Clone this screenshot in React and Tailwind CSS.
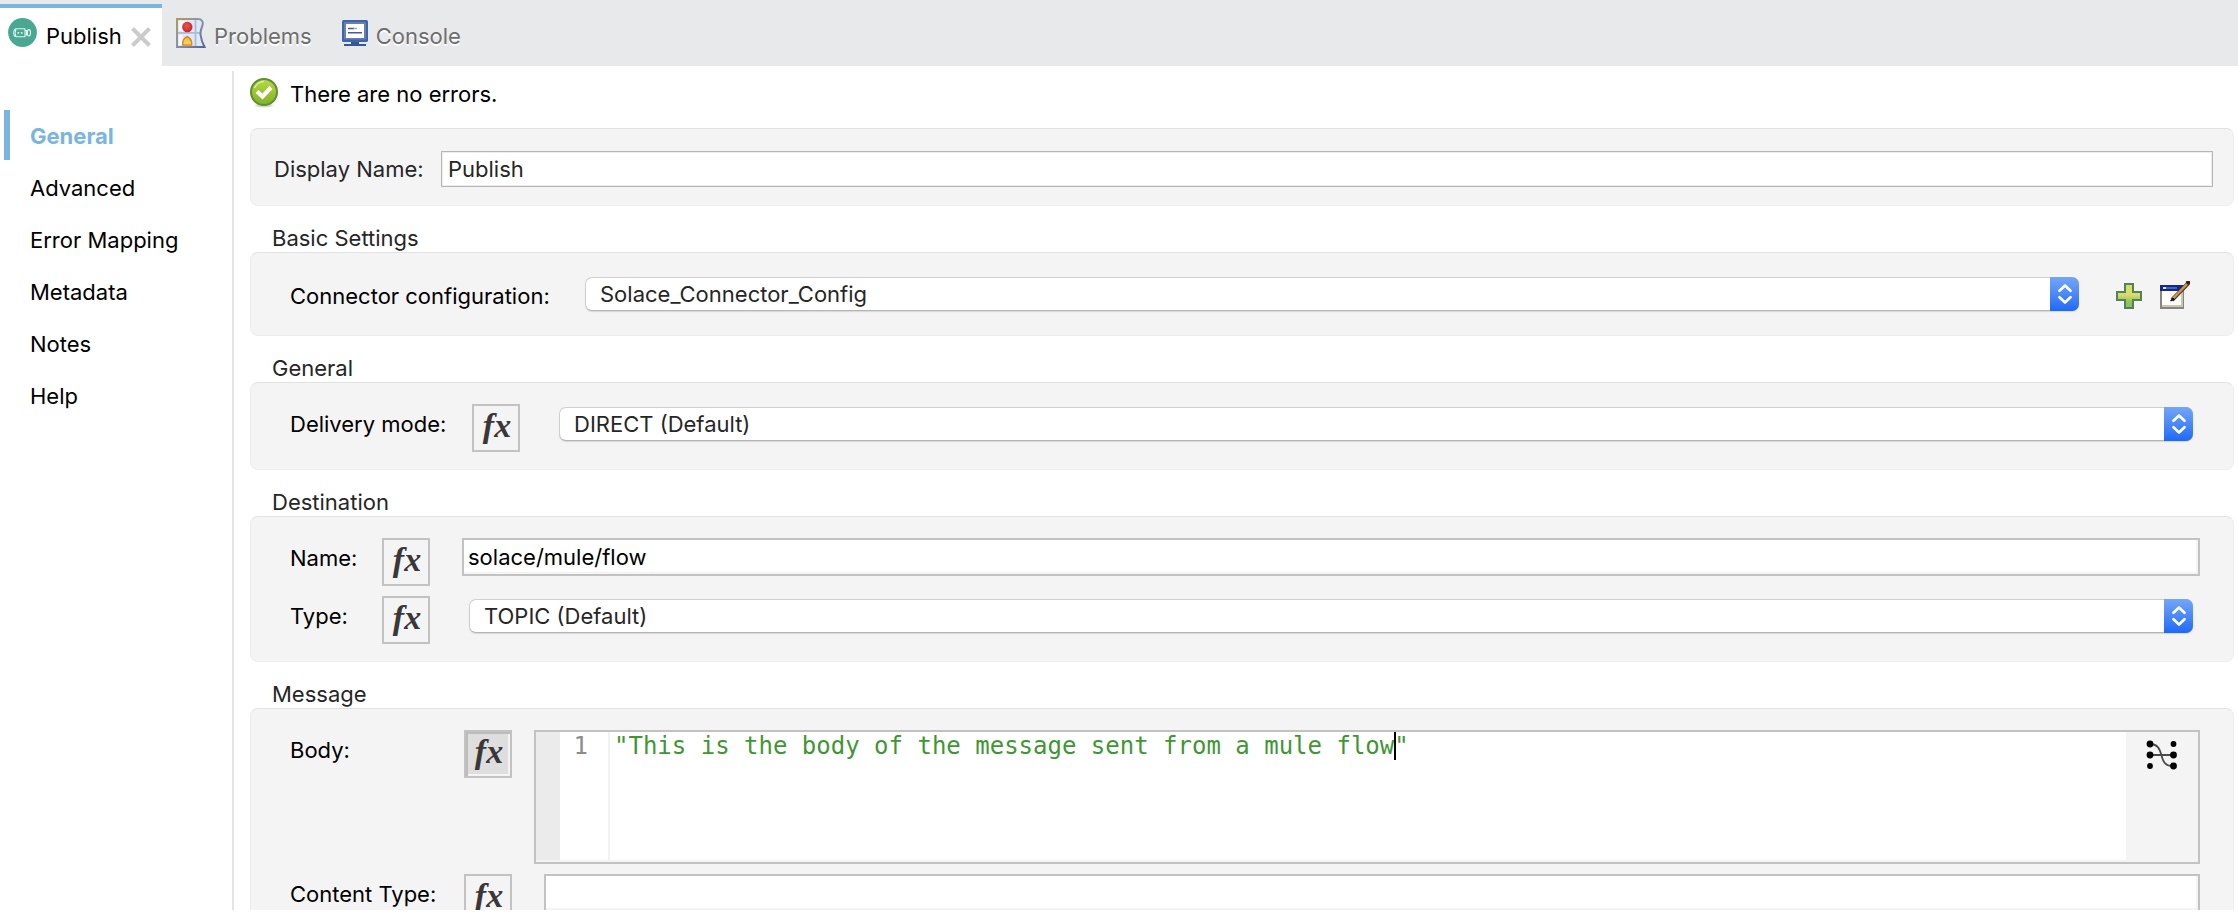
import React from "react";

function PublishIcon() {
  return (
    <svg className="size-[30px] shrink-0" viewBox="0 0 30 30" fill="none" aria-hidden="true">
      <circle cx="14.5" cy="14.5" r="14.4" fill="#49a892" />
      <g stroke="#e4f4f0" strokeWidth="1.1">
        <path d="M17 10.800H8.400C6.800 10.800 5.800 12.600 5.800 14.800s1 4 2.600 4H17z" strokeLinejoin="round" />
        <path d="M8 11.200C7 13 7 16.600 8 18.400" />
        <ellipse cx="20.900" cy="14.800" rx="1.600" ry="3.200" />
        <path d="M17 12.600h1.500v4.400H17" />
      </g>
      <circle cx="10.300" cy="14.800" r="0.9" fill="#fff" />
      <circle cx="13.700" cy="14.800" r="0.9" fill="#fff" />
    </svg>
  );
}

function ProblemsIcon() {
  return (
    <svg className="h-[30px] w-[30px] shrink-0" viewBox="0 0 30 30" fill="none" aria-hidden="true">
      <defs>
        <linearGradient id="probFrame" x1="0" y1="0" x2="1" y2="1">
          <stop offset="0" stopColor="#b09a58" />
          <stop offset="0.45" stopColor="#8c93a8" />
          <stop offset="1" stopColor="#58668f" />
        </linearGradient>
        <radialGradient id="probRed" cx="0.45" cy="0.4" r="0.6">
          <stop offset="0" stopColor="#ea5450" />
          <stop offset="1" stopColor="#c32826" />
        </radialGradient>
        <linearGradient id="probYellow" x1="0" y1="0" x2="0" y2="1">
          <stop offset="0" stopColor="#f3b23c" />
          <stop offset="1" stopColor="#fbd968" />
        </linearGradient>
      </defs>
      <path d="M1 1h21c4 0 5.500 3 4.400 6.500-1 3.500-2.400 5.500-1.800 9.500.5 4 1.400 7.500 3.900 12H1z" fill="#dfe8f5" />
      <path d="M2 14.800h23M19.500 2v26" stroke="#a9bcdc" strokeWidth="1.800" />
      <path d="M3 3h5v10H3zM3 17h3.500v10H3z" fill="#f4f8fd" />
      <path d="M1 1h21c4 0 5.500 3 4.400 6.500-1 3.500-2.400 5.500-1.800 9.500.5 4 1.400 7.500 3.900 12H1z" stroke="url(#probFrame)" strokeWidth="2" />
      <circle cx="11.300" cy="9" r="5.200" fill="url(#probRed)" />
      <path d="M6.800 27v-3C7.200 21.500 9.300 19.500 11.200 18.600c1.900.9 4 2.900 4.400 5.400v3z" fill="url(#probYellow)" stroke="#d98a1e" strokeWidth="1.500" />
    </svg>
  );
}

function ConsoleIcon() {
  return (
    <svg className="h-[26px] w-[26px] shrink-0" viewBox="0 0 26 26" fill="none" aria-hidden="true">
      <rect x="0" y="0" width="26" height="22" rx="1.600" fill="#3a66ae" />
      <rect x="2" y="2" width="22" height="17.500" rx="1" fill="#6c7fa8" />
      <rect x="4" y="4" width="18" height="14" fill="#fdfdfe" />
      <path d="M6 8.500h6M6 12.800h14" stroke="#4a5a96" strokeWidth="1.500" />
      <path d="M11.500 8.500H15" stroke="#9fb0d8" strokeWidth="1.500" />
      <path d="M9 22h8v2H9z" fill="#3a5690" />
      <path d="M2 24h22v2H2z" fill="#34589e" />
    </svg>
  );
}

function CloseIcon() {
  return (
    <svg className="size-5" viewBox="0 0 20 20" aria-hidden="true">
      <path d="M1.500 1.500l17 17M18.500 1.500l-17 17" stroke="#cbcbcb" strokeWidth="4" />
    </svg>
  );
}

function OkIcon() {
  return (
    <svg className="size-[30px] shrink-0" viewBox="0 0 30 30" fill="none" aria-hidden="true">
      <defs>
        <linearGradient id="okFill" x1="0" y1="0" x2="0" y2="1">
          <stop offset="0" stopColor="#b9d84a" />
          <stop offset="0.5" stopColor="#9cc52f" />
          <stop offset="1" stopColor="#84b12c" />
        </linearGradient>
      </defs>
      <ellipse cx="14" cy="27.500" rx="9" ry="2" fill="#d9dcd2" />
      <circle cx="14" cy="14" r="13" fill="url(#okFill)" stroke="#5f8f33" strokeWidth="2" />
      <path d="M4.500 10C6.500 5.500 10 3.500 14 3.500" stroke="#dcea9c" strokeWidth="1.400" />
      <path d="M7 13.500l5.500 5L21 9.500" stroke="#fff" strokeWidth="4.200" />
    </svg>
  );
}

function PlusIcon() {
  return (
    <svg className="size-[26px]" viewBox="0 0 26 26" aria-hidden="true">
      <defs>
        <linearGradient id="plusFill" x1="0" y1="0" x2="0" y2="1">
          <stop offset="0" stopColor="#d3de6c" />
          <stop offset="0.45" stopColor="#d9dd6a" />
          <stop offset="0.75" stopColor="#8fc25c" />
          <stop offset="1" stopColor="#8cc05a" />
        </linearGradient>
      </defs>
      <path d="M9 1h8v8h8v8h-8v8H9v-8H1V9h8z" fill="url(#plusFill)" stroke="#54805a" strokeWidth="2" />
    </svg>
  );
}

function EditIcon() {
  return (
    <svg className="h-[28px] w-[30px]" viewBox="0 0 30 28" fill="none" aria-hidden="true">
      <rect x="1" y="5" width="22" height="22" fill="#fff" stroke="#86867f" strokeWidth="2" />
      <path d="M2 25h20M22 10v16" stroke="#c9c8ae" strokeWidth="2" />
      <rect x="0" y="4" width="24" height="6" fill="#16268c" />
      <path d="M3 7h3" stroke="#d8e6ff" strokeWidth="2" />
      <path d="M6 7h11" stroke="#3f68c4" strokeWidth="2" />
      <path d="M12 19L28.500 2" stroke="#5d4428" strokeWidth="4" />
      <path d="M13 17.500L27 3" stroke="#d19a52" strokeWidth="2.200" />
      <path d="M10.500 20l2.500-3 1.500 1.500z" fill="#141414" stroke="#141414" />
      <path d="M27 2.500L29.500 0" stroke="#3a1a1a" strokeWidth="4" />
    </svg>
  );
}

function MapperIcon() {
  return (
    <svg className="size-8" viewBox="0 0 32 32" fill="none" aria-hidden="true">
      <path d="M4 4c7 0 9.500 4 11.500 11.500S20 26 27 26M4 15h24" stroke="#4a4a4a" strokeWidth="1.800" />
      <g fill="#000">
        <circle cx="4" cy="4" r="3.400" />
        <circle cx="4" cy="15" r="3.400" />
        <circle cx="4" cy="26" r="2.900" />
        <circle cx="27.500" cy="4" r="2.900" />
        <circle cx="27.500" cy="15" r="3.400" />
        <circle cx="27.500" cy="26" r="3.400" />
      </g>
    </svg>
  );
}

function Fx({ field, pressed = false }) {
  return (
    <button
      type="button"
      aria-label={"Expression mode for " + field}
      aria-pressed={pressed}
      className={
        "flex size-12 shrink-0 items-center justify-center border-2 border-[#c2c2c2] pb-1 pl-0.5 font-['Liberation_Serif',serif] text-[34px] leading-8 font-bold text-[#3a3738] italic " +
        (pressed
          ? "bg-[#dedede] shadow-[inset_2px_2px_0_#bcbcbc,inset_-2px_-2px_0_#f4f4f4]"
          : "")
      }
    >
      fx
    </button>
  );
}

function Select({ id, value, className = "" }) {
  return (
    <div className={"relative h-[34px] flex-1 " + className}>
      <select
        id={id}
        defaultValue={value}
        className="block h-full w-full appearance-none rounded-[7px] border border-[#cfcfcf] border-b-[#b4b4b4] bg-white pr-10 pl-[14px] text-[22px] leading-7 text-[#262626] shadow-[0_1px_1px_#d8d8d8]"
      >
        <option>{value}</option>
      </select>
      <span className="pointer-events-none absolute inset-y-0 right-0 flex w-[29px] items-center justify-center rounded-r-[7px] bg-linear-to-b from-[#74a6f6] to-[#1f68f7]">
        <svg className="h-5 w-[14px]" viewBox="0 0 14 20" fill="none" aria-hidden="true">
          <path
            d="M1.500 6.800L7 1.500l5.500 5.300M1.500 13.200L7 18.500l5.500-5.300"
            stroke="#fff"
            strokeWidth="2.600"
            strokeLinecap="round"
            strokeLinejoin="round"
          />
        </svg>
      </span>
    </div>
  );
}

function Card({ className, children }) {
  return (
    <div className={"rounded-lg border border-[#ededed] border-t-[#e2e2e2] bg-[#f4f4f4] " + className}>
      {children}
    </div>
  );
}

function Section({ title, className, children }) {
  return (
    <section className="mt-[18px]">
      <h2 className="pl-[22px] leading-7 text-[#262626]">{title}</h2>
      <Card className={className}>{children}</Card>
    </section>
  );
}

function FieldLabel({ htmlFor, className, children }) {
  return (
    <label htmlFor={htmlFor} className={"mt-1.5 shrink-0 leading-7 " + className}>
      {children}
    </label>
  );
}

const navItems = ["General", "Advanced", "Error Mapping", "Metadata", "Notes", "Help"];

export default function App() {
  return (
    <div className="flex h-screen flex-col overflow-hidden bg-white pb-1 font-['Inter',sans-serif] text-[22px] text-black">
      <header className="flex h-[66px] shrink-0 bg-[#e8e9eb] pt-1">
        <div className="flex w-[162px] items-start border-t-4 border-[#79b5de] bg-white pt-2.5 pl-2">
          <PublishIcon />
          <button type="button" className="mt-1 ml-2 leading-7">Publish</button>
          <button type="button" aria-label="Close Publish" className="mt-[9px] ml-[9px]">
            <CloseIcon />
          </button>
        </div>
        <button type="button" className="flex items-start pt-3.5 pl-[14px] text-[#6e6e6e] text-shadow-[0_2px_0_#ffffff]">
          <ProblemsIcon />
          <span className="mt-1 ml-2 leading-7">Problems</span>
        </button>
        <button type="button" className="flex items-start pt-4 pl-[30px] text-[#6e6e6e] text-shadow-[0_2px_0_#ffffff]">
          <ConsoleIcon />
          <span className="mt-0.5 ml-2 leading-7">Console</span>
        </button>
      </header>

      <div className="flex min-h-0 flex-1">
        <nav className="mt-[5px] w-[234px] shrink-0 border-r-2 border-[#e4e4e4] pt-[39px] pl-1">
          <ul>
            {navItems.map((item, i) => (
              <li key={item} className="h-[52px]">
                <a
                  href={"#" + item.toLowerCase().replace(" ", "-")}
                  className={
                    "flex h-[50px] items-center border-l-6 pt-0.5 pl-5 leading-7 " +
                    (i === 0 ? "border-[#79b5de] font-bold text-[#79b5de]" : "border-transparent")
                  }
                >
                  {item}
                </a>
              </li>
            ))}
          </ul>
        </nav>

        <main className="min-w-0 flex-1 overflow-hidden pt-3 pr-1 pl-4">
          <div className="mb-5 flex h-[30px] items-start">
            <OkIcon />
            <p className="mt-0.5 ml-2.5 leading-7">There are no errors.</p>
          </div>

          <Card className="flex items-center pt-[22px] pr-5 pb-[18px] pl-[23px]">
            <label htmlFor="display-name" className="w-[167px] shrink-0 leading-7 text-[#262626]">
              Display Name:
            </label>
            <input
              id="display-name"
              defaultValue="Publish"
              className="h-9 min-w-0 flex-1 border border-[#b6b6b6] bg-white px-1.5 text-[#262626] shadow-[inset_0_0_0_1px_#ededed]"
            />
          </Card>

          <Section title="Basic Settings" className="flex items-center pt-6 pr-[43px] pb-6 pl-[39px]">
            <label htmlFor="connector" className="mt-1 w-[295px] shrink-0 leading-7">
              Connector configuration:
            </label>
            <Select id="connector" value="Solace_Connector_Config" />
            <button type="button" aria-label="Add configuration" className="mt-1 ml-[37px]">
              <PlusIcon />
            </button>
            <button type="button" aria-label="Edit configuration" className="mt-0.5 ml-[18px]">
              <EditIcon />
            </button>
          </Section>

          <Section title="General" className="flex items-start pt-[21px] pr-10 pb-[17px] pl-[39px]">
            <FieldLabel htmlFor="delivery-mode" className="w-[182px]">Delivery mode:</FieldLabel>
            <Fx field="Delivery mode" />
            <Select id="delivery-mode" value="DIRECT (Default)" className="mt-[3px] ml-[39px]" />
          </Section>

          <Section title="Destination" className="flex flex-col gap-2.5 pt-[21px] pr-[33px] pb-[17px] pl-[39px]">
            <div className="flex items-start">
              <FieldLabel htmlFor="dest-name" className="w-[92px]">Name:</FieldLabel>
              <Fx field="Name" />
              <input
                id="dest-name"
                defaultValue="solace/mule/flow"
                className="ml-8 h-[38px] min-w-0 flex-1 border-2 border-[#c2c2c2] bg-white px-1 shadow-[inset_-2px_-2px_0_#f4f4f4]"
              />
            </div>
            <div className="flex items-start">
              <FieldLabel htmlFor="dest-type" className="w-[92px]">Type:</FieldLabel>
              <Fx field="Type" />
              <Select id="dest-type" value="TOPIC (Default)" className="mt-[3px] mr-[7px] ml-[39px]" />
            </div>
          </Section>

          <Section title="Message" className="flex flex-col gap-2.5 pt-[21px] pr-[33px] pb-[17px] pl-[39px]">
            <div className="flex items-start">
              <FieldLabel htmlFor="body" className="w-[174px]">Body:</FieldLabel>
              <Fx field="Body" pressed />
              <div className="ml-[22px] flex h-[134px] min-w-0 flex-1 border-2 border-[#c2c2c2] bg-[#f4f4f4] pb-0.5 font-['DejaVu_Sans_Mono',monospace] text-2xl leading-7">
                <div className="w-6 bg-[#ebebeb]" />
                <div className="w-[50px] border-r-2 border-[#f2f2f2] bg-white pr-5 text-right text-[#8c8c8c]">1</div>
                <div className="relative min-w-0 flex-1 bg-white pl-1">
                  <textarea
                    id="body"
                    spellCheck={false}
                    defaultValue={'"This is the body of the message sent from a mule flow"'}
                    className="block h-full w-full resize-none text-[#419634] outline-none"
                  />
                  <span className="absolute top-0 left-[54ch] ml-1 h-7 w-0.5 bg-black" />
                </div>
                <div className="w-[72px] pt-2 pl-5">
                  <button type="button" aria-label="Open mapping">
                    <MapperIcon />
                  </button>
                </div>
              </div>
            </div>
            <div className="flex items-start">
              <FieldLabel htmlFor="content-type" className="w-[174px]">Content Type:</FieldLabel>
              <Fx field="Content Type" />
              <input
                id="content-type"
                className="ml-8 h-[38px] min-w-0 flex-1 border-2 border-[#c2c2c2] bg-white px-1 shadow-[inset_-2px_-2px_0_#f4f4f4]"
              />
            </div>
          </Section>
        </main>
      </div>
    </div>
  );
}
